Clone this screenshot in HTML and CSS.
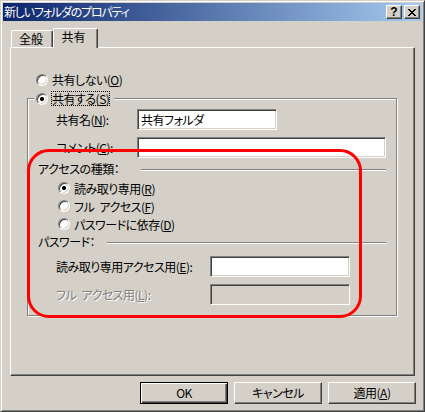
FILE: index.html
```html
<!DOCTYPE html>
<html lang="ja">
<head>
<meta charset="utf-8">
<title>新しいフォルダのプロパティ</title>
<link rel="stylesheet" href="styles.css">
</head>
<body>
<div class="window">
  <div class="titlebar">
    <span class="title">新しいフォルダのプロパティ</span>
    <div class="caption-buttons">
      <span class="cap-btn help">?</span>
      <span class="cap-btn close"><svg width="8" height="7" viewBox="0 0 8 7" shape-rendering="crispEdges"><path d="M0 0h2v1h-2zM6 0h2v1h-2zM1 1h2v1h-2zM5 1h2v1h-2zM2 2h4v1h-4zM3 3h2v1h-2zM2 4h4v1h-4zM1 5h2v1h-2zM5 5h2v1h-2zM0 6h2v1h-2zM6 6h2v1h-2z" fill="#000"/></svg></span>
    </div>
  </div>

  <div class="tabs">
    <div class="tab">全般</div>
    <div class="tab active">共有</div>
  </div>

  <div class="panel">
    <div class="radio-row top-radio"><span class="radio"></span><span class="rlabel">共有しない(<u>O</u>)</span></div>

    <div class="group">
      <div class="legend"><span class="radio checked"></span><span class="rlabel focus">共有する(<u>S</u>)</span></div>

      <div class="field-row name-row">
        <span class="flabel w81">共有名(<u>N</u>):</span>
        <div class="input w140">共有フォルダ</div>
      </div>
      <div class="field-row comment-row">
        <span class="flabel w81">コメント(<u>C</u>):</span>
        <div class="input w249"></div>
      </div>

      <div class="section access-section">
        <span class="slabel w103">アクセスの種類：</span>
        <span class="sep"></span>
      </div>
      <div class="sub-radios">
        <div class="radio-row"><span class="radio checked"></span><span class="rlabel">読み取り専用(<u>R</u>)</span></div>
        <div class="radio-row"><span class="radio"></span><span class="rlabel">フル アクセス(<u>F</u>)</span></div>
        <div class="radio-row"><span class="radio"></span><span class="rlabel">パスワードに依存(<u>D</u>)</span></div>
      </div>

      <div class="section pass-section">
        <span class="slabel w69">パスワード：</span>
        <span class="sep"></span>
      </div>
      <div class="field-row ro-row">
        <span class="flabel w154">読み取り専用アクセス用(<u>E</u>):</span>
        <div class="input w140"></div>
      </div>
      <div class="field-row full-row">
        <span class="flabel w154 disabled">フル アクセス用(<u>L</u>):</span>
        <div class="input w140 input-disabled"></div>
      </div>
    </div>
  </div>

  <div class="buttons">
    <button class="btn default">OK</button>
    <button class="btn">キャンセル</button>
    <button class="btn">適用(<u>A</u>)</button>
  </div>

  <div class="highlight"></div>
</div>
</body>
</html>
```

FILE: styles.css
```css
* { box-sizing: border-box; }

html, body {
  margin: 0;
  padding: 0;
}

body {
  background: #d4d0c8;
  font-family: "Noto Sans CJK JP", "Noto Sans", sans-serif;
  font-size: 12px;
  line-height: 16px;
  color: #000;
  font-feature-settings: "palt";
  letter-spacing: -0.5px;
  word-spacing: 3px;
}

.window {
  position: relative;
  width: 425px;
  height: 412px;
  background: #d4d0c8;
  border: 1px solid;
  border-color: #d4d0c8 #404040 #404040 #d4d0c8;
  box-shadow: inset 1px 1px #fff, inset -1px -1px #808080;
  padding: 2px;
}

/* Title bar */
.titlebar {
  height: 18px;
  background: linear-gradient(to right, #0a246a, #a6caf0);
  display: flex;
  align-items: center;
  justify-content: space-between;
  padding: 0 2px 0 1px;
}

.title {
  color: #fff;
  font-size: 12px;
  line-height: 18px;
  letter-spacing: -1.2px;
}

.caption-buttons {
  display: flex;
  gap: 2px;
}

.cap-btn {
  width: 16px;
  height: 14px;
  background: #d4d0c8;
  border: 1px solid;
  border-color: #fff #404040 #404040 #fff;
  box-shadow: inset -1px -1px #808080;
  display: flex;
  align-items: center;
  justify-content: center;
}

.cap-btn.help {
  font-family: "Liberation Sans", "DejaVu Sans", sans-serif;
  font-weight: bold;
  font-size: 12px;
  line-height: 12px;
  letter-spacing: 0;
  padding-bottom: 1px;
}

.cap-btn.close svg {
  display: block;
}

/* Tabs */
.tabs {
  display: flex;
  align-items: flex-end;
  margin: 7px 0 0 8px;
  height: 19px;
}

.tab {
  height: 17px;
  width: 42px;
  border-top: 1px solid #fff;
  border-left: 1px solid #fff;
  border-right: 1px solid #404040;
  box-shadow: inset -1px 0 #808080;
  border-radius: 2px 2px 0 0;
  background: #d4d0c8;
  text-align: center;
  line-height: 15px;
  padding-right: 2px;
  letter-spacing: 0;
}

.tab.active {
  width: 45px;
  height: 20px;
  margin-bottom: -1px;
  z-index: 1;
  line-height: 16px;
  padding-right: 4px;
}

/* Panel */
.panel {
  margin-left: 7px;
  width: 405px;
  height: 329px;
  border: 1px solid;
  border-color: #fff #404040 #404040 #fff;
  box-shadow: inset -1px -1px #808080;
  padding-top: 23px;
}

/* Radios */
.radio-row {
  display: flex;
  align-items: center;
  gap: 3px;
  height: 18px;
}

.top-radio {
  margin-left: 25px;
  height: 17px;
}

.radio {
  width: 12px;
  height: 12px;
  flex: none;
  border-radius: 50%;
  background: #fff;
  border: 1px solid;
  border-color: #808080 #fff #fff #808080;
  box-shadow: inset 1px 1px #404040, inset -1px -1px #d4d0c8;
}

.radio.checked {
  background: radial-gradient(circle, #000 0 1.8px, #fff 2.3px);
}

.rlabel {
  border: 1px solid transparent;
  line-height: 13px;
  white-space: nowrap;
}

.rlabel.focus {
  border: 1px dotted #000;
}

u {
  text-decoration: underline;
  text-underline-offset: 1px;
}

/* Group box */
.group {
  margin: 10px 0 0 16px;
  width: 370px;
  height: 218px;
  border: 1px solid #808080;
  box-shadow: 1px 1px #fff, inset 1px 1px #fff;
}

.legend {
  display: flex;
  align-items: center;
  gap: 3px;
  width: fit-content;
  height: 17px;
  margin: -9px 0 0 6px;
  padding: 0 4px 0 2px;
  background: #d4d0c8;
}

.field-row {
  display: flex;
  align-items: center;
  height: 21px;
  padding-left: 28px;
}

.name-row { margin-top: 2px; }
.comment-row { margin-top: 7px; }
.ro-row { margin-top: 6px; }
.full-row { margin-top: 7px; }

.flabel {
  flex: none;
  white-space: nowrap;
}

.w81 { width: 81px; }
.w154 { width: 154px; }
.w103 { width: 103px; }
.w69 { width: 69px; }
.w140 { width: 140px; }
.w249 { width: 249px; }

.flabel.disabled {
  color: #808080;
  text-shadow: 1px 1px 0 #fff;
}

.input {
  height: 21px;
  background: #fff;
  border: 1px solid;
  border-color: #808080 #fff #fff #808080;
  box-shadow: inset 1px 1px #404040, inset -1px -1px #d4d0c8;
  padding: 1px 3px;
  line-height: 17px;
  white-space: nowrap;
}

.input.input-disabled {
  background: #d4d0c8;
}

/* Section headings with etched line */
.section {
  display: flex;
  align-items: center;
  height: 16px;
  padding: 0 10px;
}

.access-section { margin-top: 3px; }
.pass-section { margin-top: 1px; }

.slabel {
  flex: none;
  white-space: nowrap;
}

.sep {
  flex: 1;
  height: 2px;
  border-top: 1px solid #808080;
  border-bottom: 1px solid #fff;
  margin-top: 2px;
}

.sub-radios {
  margin-top: 2px;
  padding-left: 30px;
}

/* Buttons */
.buttons {
  display: flex;
  justify-content: flex-end;
  gap: 6px;
  margin: 6px 6px 0 0;
}

.btn {
  width: 88px;
  height: 22px;
  background: #d4d0c8;
  border: 1px solid;
  border-color: #fff #404040 #404040 #fff;
  box-shadow: inset -1px -1px #808080;
  font-family: inherit;
  font-size: 12px;
  line-height: 16px;
  color: #000;
  padding: 0;
  font-feature-settings: "palt";
  letter-spacing: -0.5px;
}

.btn.default {
  border: 1px solid #000;
  box-shadow: inset 1px 1px #fff, inset -1px -1px #404040, inset -2px -2px #808080;
}

/* Red annotation overlay */
.highlight {
  position: absolute;
  left: 26px;
  top: 148px;
  width: 335px;
  height: 169px;
  border: 3px solid #ff0000;
  border-radius: 22px;
  pointer-events: none;
}
```
